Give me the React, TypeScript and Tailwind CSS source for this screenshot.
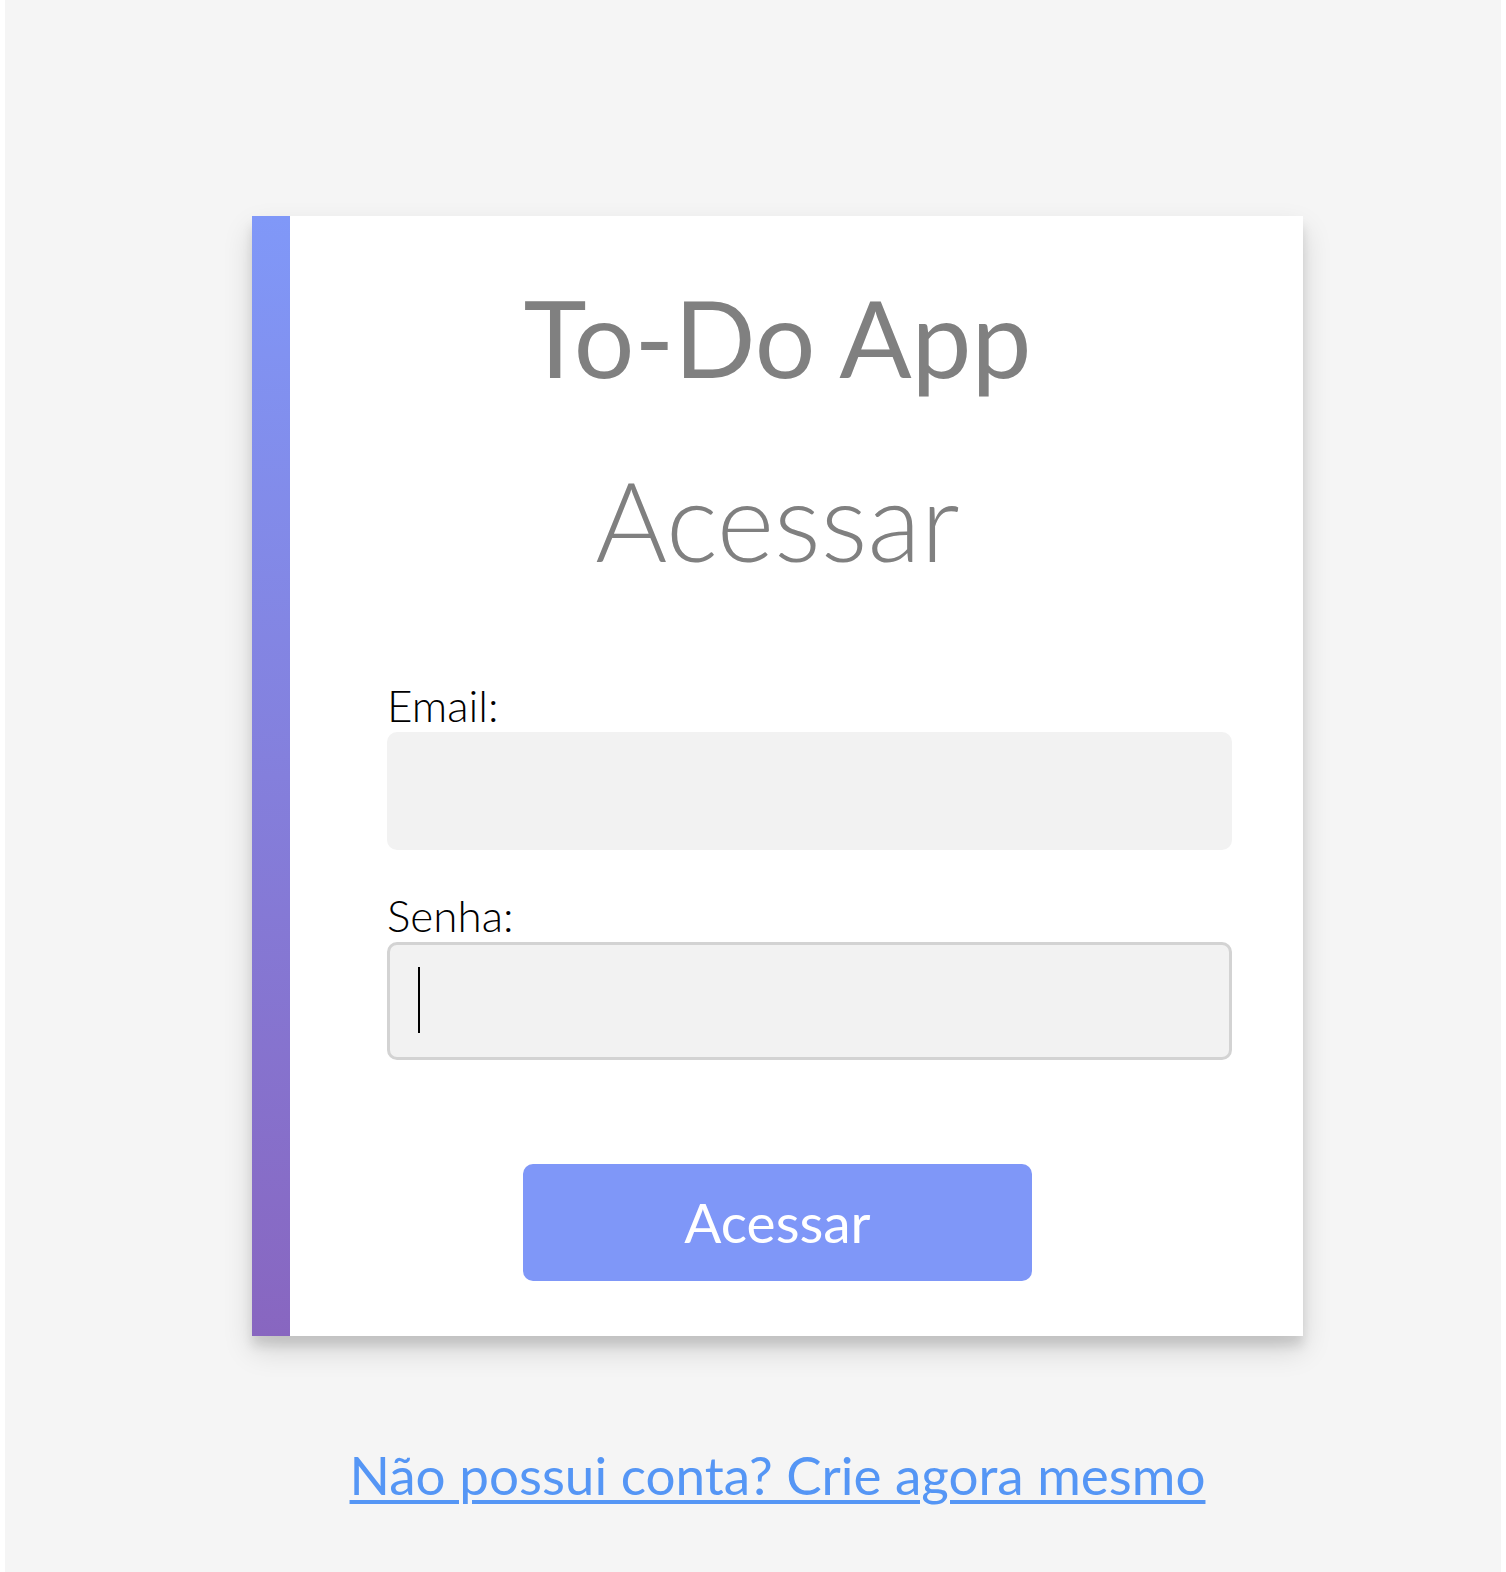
import React from "react";

const App = () => {
  return (
    <div className="min-h-screen bg-white font-['Lato','Liberation_Sans',sans-serif]">
      <div className="mx-[5px] min-h-[1572px] bg-[#f5f5f5] pt-[216px]">
        <div className="ml-[247px] flex h-[1120px] w-[1051px] flex-col bg-white bg-[linear-gradient(to_bottom,#8098f8,#8866c0)] bg-[length:38px_100%] bg-no-repeat pt-[67px] shadow-[0_14px_28px_rgba(0,0,0,0.14),0_10px_10px_rgba(0,0,0,0.1)]">
          <h1 className="text-center text-[107px] leading-none font-normal text-[#808080]">
            To-Do App
          </h1>
          <h2 className="mt-[74px] text-center text-[110px] leading-none font-light text-[#808080]">
            Acessar
          </h2>
          <form className="ml-[135px] mt-[109px] flex w-[845px] flex-col">
            <label htmlFor="email" className="text-[44px] leading-none font-light text-black">
              Email:
            </label>
            <input
              id="email"
              type="email"
              className="mt-[5px] h-[118px] rounded-[10px] border-[3px] border-transparent bg-[#f2f2f2] px-[28px] text-[44px] outline-none"
            />
            <label htmlFor="senha" className="mt-[43px] text-[44px] leading-none font-light text-black">
              Senha:
            </label>
            <div className="relative mt-[5px]">
              <input
                id="senha"
                type="password"
                autoFocus
                className="h-[118px] w-full rounded-[10px] border-[3px] border-[#d3d3d3] bg-[#f2f2f2] px-[28px] text-[44px] caret-black outline-none"
              />
              <span className="pointer-events-none absolute left-[31px] top-[25px] h-[66px] w-[2px] bg-black" />
            </div>
          </form>
          <button
            type="button"
            className="mx-auto mt-[104px] h-[117px] w-[509px] rounded-[10px] bg-[#7f97f8] text-[55px] text-white"
          >
            Acessar
          </button>
        </div>
        <div className="ml-[247px] w-[1051px] pt-[112px] text-center text-[53px] leading-none">
          <a href="#" className="text-[#5596f5] underline decoration-[4px] underline-offset-[5px]">
            Não possui conta? Crie agora mesmo
          </a>
        </div>
      </div>
    </div>
  );
};

export default App;
